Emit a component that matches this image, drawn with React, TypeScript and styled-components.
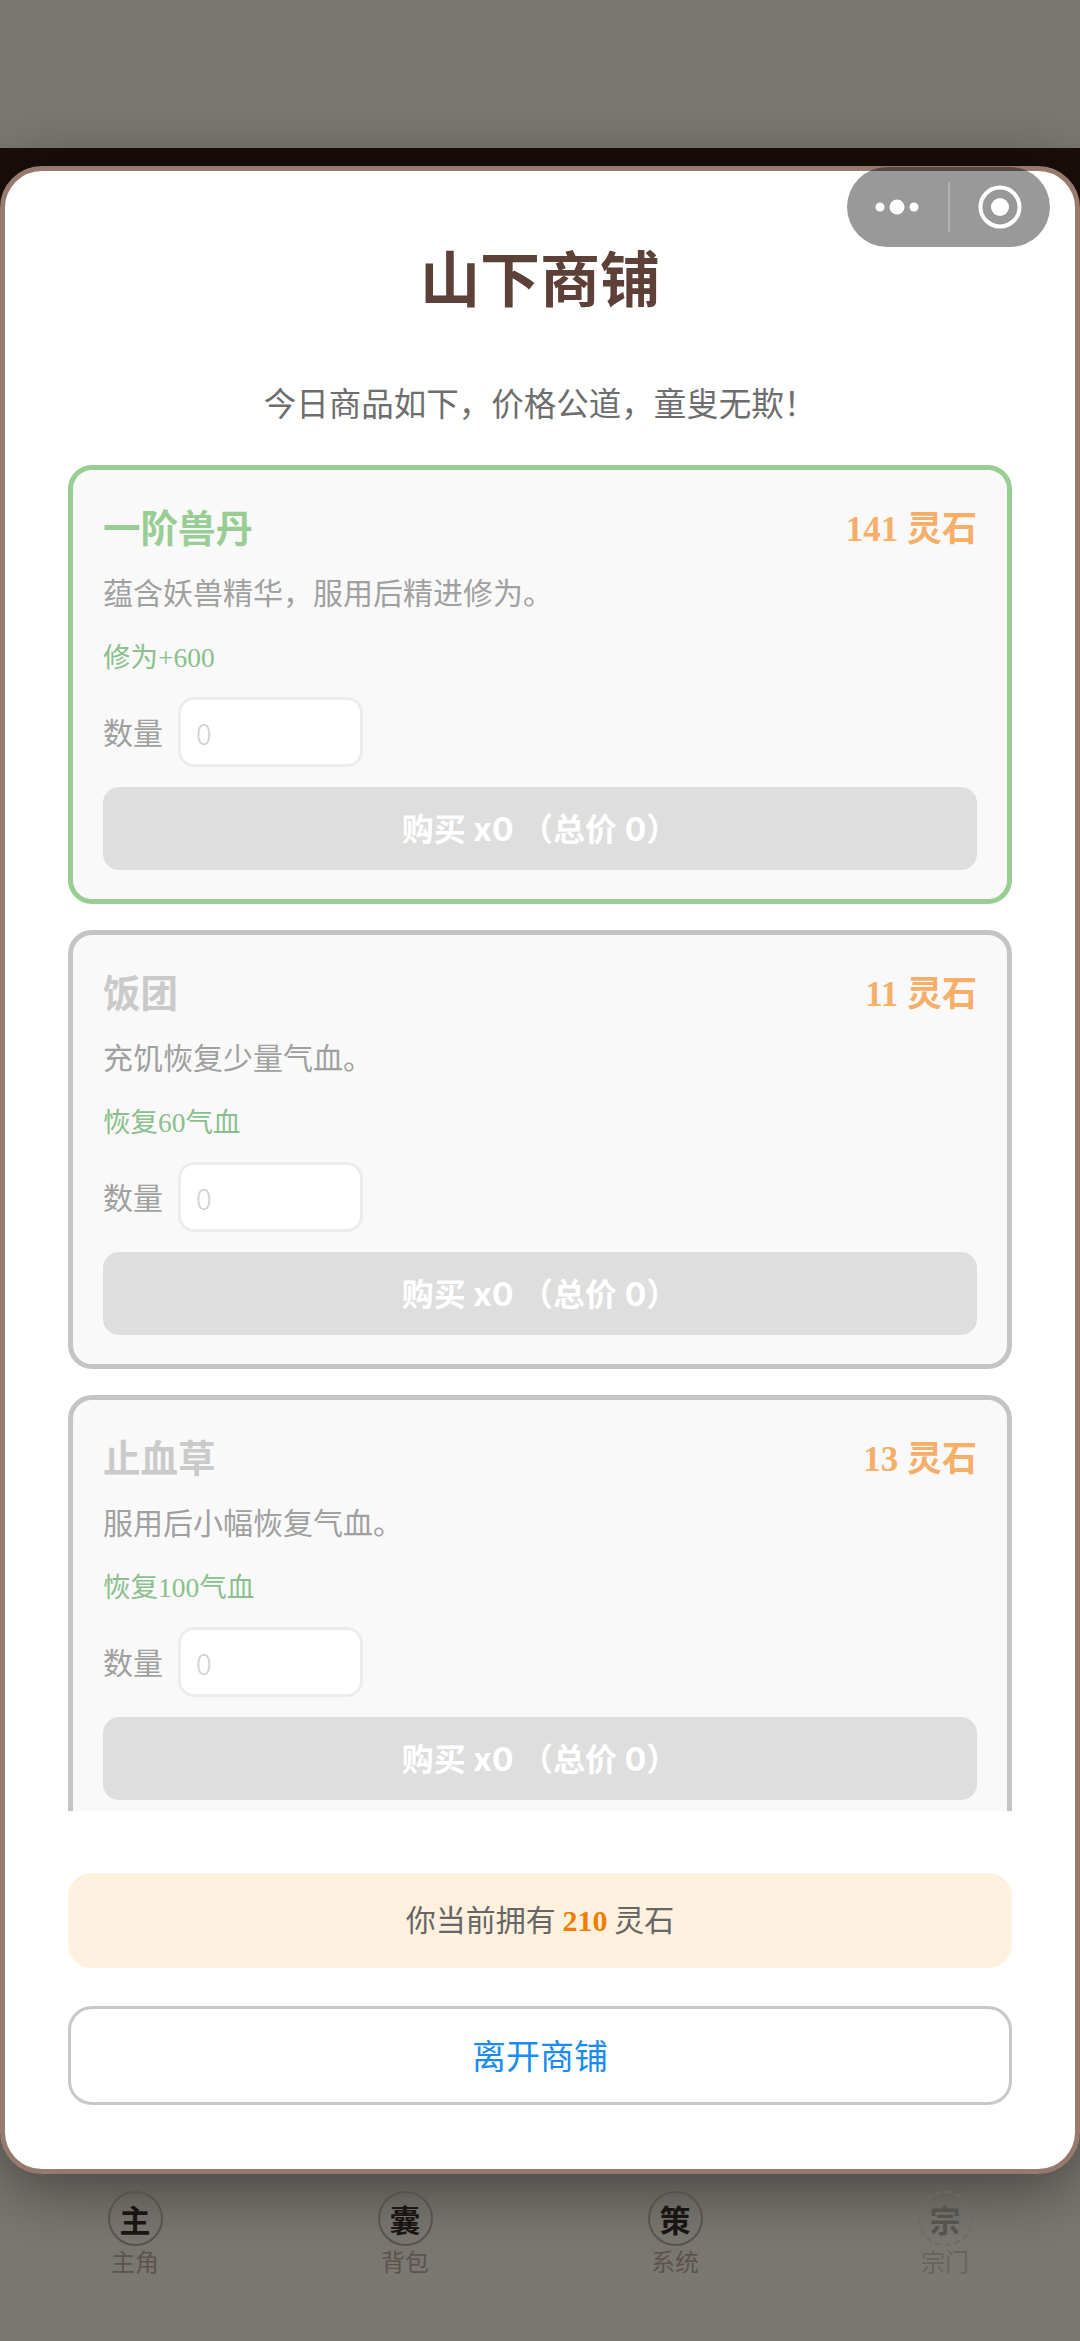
import React from 'react';
import styled, {createGlobalStyle} from 'styled-components';

interface Goods {
  name: string,
  desc: string,
  effect: string,
  price: number,
}

interface Tab {
  icon: string,
  label: string,
  locked?: boolean,
}

const GOODS: Goods[] = [
  {name: '一阶兽丹', desc: '蕴含妖兽精华，服用后精进修为。', effect: '修为+600', price: 141},
  {name: '饭团', desc: '充饥恢复少量气血。', effect: '恢复60气血', price: 11},
  {name: '止血草', desc: '服用后小幅恢复气血。', effect: '恢复100气血', price: 13},
];

const TABS: Tab[] = [
  {icon: '主', label: '主角'},
  {icon: '囊', label: '背包'},
  {icon: '策', label: '系统'},
  {icon: '宗', label: '宗门', locked: true},
];

const SANS = '"Noto Sans CJK SC", "Noto Sans", sans-serif';
const SERIF = '"Liberation Serif", "Noto Sans CJK SC", serif';

const GlobalStyle = createGlobalStyle`
  html, body {
    margin: 0;
    padding: 0;
    background: #7b7872;
  }
  * {
    box-sizing: border-box;
  }
`;

const Page = styled.div`
  display: flex;
  flex-direction: column;
  width: 1080px;
  height: 2341px;
  overflow: hidden;
  font-family: ${SANS};
`;

const TopArea = styled.div`
  height: 148px;
  flex-shrink: 0;
  background-color: #7b7872;
`;

const DarkBand = styled.div`
  position: relative;
  z-index: 1;
  height: 59px;
  flex-shrink: 0;
  background-color: #1a0f0c;
`;

const Modal = styled.div`
  position: relative;
  z-index: 2;
  display: flex;
  flex-direction: column;
  flex-shrink: 0;
  width: 1080px;
  height: 2008px;
  margin-top: -41px;
  padding: 63px 63px 64px;
  background-color: white;
  border: 5px solid #977a6e;
  border-radius: 42px;
  box-shadow: 0 10px 70px rgba(0, 0, 0, 0.5);
`;

const Capsule = styled.div`
  position: absolute;
  top: -4px;
  right: 25px;
  display: flex;
  align-items: center;
  width: 203px;
  height: 80px;
  background-color: rgba(0, 0, 0, 0.4);
  border-radius: 40px;
`;

const CapsulePart = styled.div`
  flex: 1;
  display: flex;
  align-items: center;
  justify-content: center;
`;

const CapsuleDivider = styled.div`
  width: 2px;
  height: 50px;
  background-color: rgba(255, 255, 255, 0.25);
`;

const Title = styled.h1`
  margin: 0;
  font-size: 60px;
  line-height: 84px;
  font-weight: 700;
  text-align: center;
  color: #5d4037;
`;

const Subtitle = styled.div`
  margin-top: 61px;
  font-size: 32.5px;
  line-height: 46px;
  text-align: center;
  color: #6e6e6e;
`;

const GoodsList = styled.div`
  flex: 1;
  min-height: 0;
  display: flex;
  flex-direction: column;
  gap: 26px;
  margin-top: 40px;
  overflow: hidden;
`;

const Card = styled.div<{$active: boolean}>`
  flex-shrink: 0;
  height: 439px;
  padding: 28px 30px 30px;
  background-color: #f9f9f9;
  border: 5px solid ${(p) => (p.$active ? '#98ce94' : '#c4c4c4')};
  border-radius: 24px;
`;

const CardHeader = styled.div`
  display: flex;
  align-items: center;
  justify-content: space-between;
  height: 54px;
`;

const GoodsName = styled.div<{$active: boolean}>`
  font-size: 37.5px;
  font-weight: 700;
  color: ${(p) => (p.$active ? '#98ce94' : '#cacaca')};
`;

const Price = styled.div`
  font-family: ${SERIF};
  font-size: 35px;
  font-weight: 700;
  color: #f7ae68;
`;

const Desc = styled.div`
  margin-top: 17px;
  font-size: 30px;
  line-height: 44px;
  color: #a0a0a0;
`;

const Effect = styled.div`
  margin-top: 25px;
  font-family: ${SERIF};
  font-size: 27.5px;
  line-height: 40px;
  color: #8ac08c;
`;

const QtyRow = styled.div`
  display: flex;
  align-items: center;
  gap: 15px;
  margin-top: 19px;
`;

const QtyLabel = styled.div`
  padding-bottom: 3px;
  font-size: 30px;
  color: #a0a0a0;
`;

const QtyInput = styled.input`
  width: 185px;
  height: 70px;
  padding: 0 15px;
  font-family: ${SANS};
  font-size: 29px;
  font-weight: 300;
  background-color: white;
  border: 3px solid #ececec;
  border-radius: 16px;
  outline: none;

  &::placeholder {
    color: #cfcfcf;
  }
`;

const BuyButton = styled.button`
  display: block;
  width: 100%;
  height: 83px;
  margin-top: 20px;
  padding: 0 0 4px;
  font-family: Inter, ${SANS};
  font-size: 32px;
  font-weight: 700;
  color: white;
  background-color: #dedede;
  border: none;
  border-radius: 16px;
`;

const Balance = styled.div`
  flex-shrink: 0;
  height: 95px;
  margin-top: 62px;
  font-size: 30px;
  line-height: 91px;
  text-align: center;
  color: #666;
  background-color: #fff1de;
  border-radius: 24px;
`;

const Amount = styled.span`
  font-family: ${SERIF};
  font-weight: 700;
  color: #f07d00;
`;

const LeaveButton = styled.button`
  flex-shrink: 0;
  width: 100%;
  height: 99px;
  margin-top: 38px;
  padding: 0 0 2px;
  font-family: ${SANS};
  font-size: 34px;
  color: #1a8cf0;
  background-color: white;
  border: 3px solid #c8c8c8;
  border-radius: 24px;
`;

const TabBar = styled.div`
  flex: 1;
  display: grid;
  grid-template-columns: repeat(4, 1fr);
  align-items: start;
  margin-top: -40px;
  padding-top: 57px;
  background-color: #7b7872;
`;

const TabItem = styled.div`
  position: relative;
  z-index: 3;
  display: flex;
  flex-direction: column;
  align-items: center;
`;

const TabIcon = styled.div<{$locked?: boolean}>`
  display: flex;
  align-items: center;
  justify-content: center;
  width: 55px;
  height: 55px;
  font-size: 31px;
  font-weight: 700;
  color: ${(p) => (p.$locked ? '#55534e' : '#1a1512')};
  border: 2px ${(p) => (p.$locked ? 'dashed #6c6a64' : 'solid #55534e')};
  border-radius: 50%;
`;

const TabLabel = styled.div<{$locked?: boolean}>`
  font-size: 24px;
  line-height: 30px;
  color: ${(p) => (p.$locked ? '#66635e' : '#5c534d')};
`;

function CapsuleMenu(): React.ReactElement {
  return (
    <Capsule>
      <CapsulePart>
        <svg width='56' height='20' viewBox='0 0 56 20'>
          <circle cx='11' cy='10' r='4.5' fill='white' />
          <circle cx='28' cy='10' r='7.5' fill='white' />
          <circle cx='45' cy='10' r='4.5' fill='white' />
        </svg>
      </CapsulePart>
      <CapsuleDivider />
      <CapsulePart>
        <svg width='44' height='44' viewBox='0 0 44 44'>
          <circle cx='22' cy='22' r='19.5' fill='none' stroke='white' strokeWidth='4' />
          <circle cx='22' cy='22' r='9' fill='white' />
        </svg>
      </CapsulePart>
    </Capsule>
  );
}

function App(): React.ReactElement {
  return (
    <Page>
      <GlobalStyle />
      <TopArea />
      <DarkBand />
      <Modal>
        <CapsuleMenu />
        <Title>山下商铺</Title>
        <Subtitle>今日商品如下，价格公道，童叟无欺！</Subtitle>
        <GoodsList>
          {GOODS.map((item, i) => (
            <Card key={item.name} $active={i === 0}>
              <CardHeader>
                <GoodsName $active={i === 0}>{item.name}</GoodsName>
                <Price>{item.price} 灵石</Price>
              </CardHeader>
              <Desc>{item.desc}</Desc>
              <Effect>{item.effect}</Effect>
              <QtyRow>
                <QtyLabel>数量</QtyLabel>
                <QtyInput placeholder='0' readOnly />
              </QtyRow>
              <BuyButton>购买 x0 （总价 0）</BuyButton>
            </Card>
          ))}
        </GoodsList>
        <Balance>
          你当前拥有 <Amount>210</Amount> 灵石
        </Balance>
        <LeaveButton>离开商铺</LeaveButton>
      </Modal>
      <TabBar>
        {TABS.map((tab) => (
          <TabItem key={tab.label}>
            <TabIcon $locked={tab.locked}>{tab.icon}</TabIcon>
            <TabLabel $locked={tab.locked}>{tab.label}</TabLabel>
          </TabItem>
        ))}
      </TabBar>
    </Page>
  );
}

export default App;
